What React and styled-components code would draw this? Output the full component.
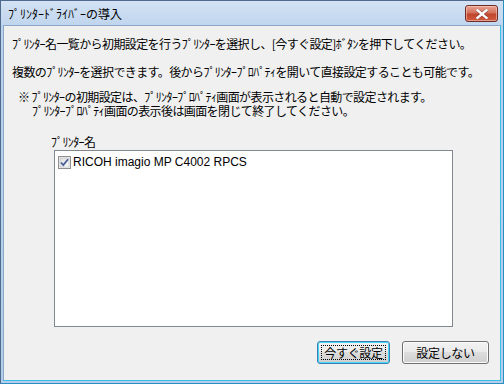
import React from "react";
import styled, { createGlobalStyle } from "styled-components";

const Global = createGlobalStyle`
  html, body { margin: 0; padding: 0; background: #fff; }
  body { width: 504px; height: 384px; overflow: hidden; }
`;

const Window = styled.div`
  box-sizing: border-box;
  width: 504px;
  height: 384px;
  display: flex;
  flex-direction: column;
  border: 1px solid #4e6a8c;
  border-bottom-color: #2a8fc0;
  border-right-color: #2a8fc0;
  background: linear-gradient(#c4d8ef, #b9d1ec 30px, #b3cdea);
  font-family: "Noto Sans CJK JP", "Noto Sans", sans-serif;
  font-size: 12px;
  color: #000;
`;

const TitleBar = styled.div`
  height: 24px;
  flex: none;
  display: flex;
  align-items: center;
  justify-content: space-between;
  padding: 0 5px 0 7px;
  background: linear-gradient(#d3e2f4, #c0d5ee);
`;

const Title = styled.span`
  font-size: 12px;
  line-height: 14px;
  margin-top: 2px;
`;

const CloseButton = styled.div`
  box-sizing: border-box;
  width: 33px;
  height: 17px;
  margin-top: 1px;
  border: 1px solid #6e2c27;
  border-radius: 3px;
  background: linear-gradient(#e8a493, #d4705c 45%, #c0452d 55%, #cf5b40);
  box-shadow: inset 0 0 0 1px rgba(255, 220, 210, 0.5);
  display: flex;
  align-items: center;
  justify-content: center;
`;

const Client = styled.div`
  flex: 1;
  margin: 0 2px 2px 2px;
  border: 1px solid #8aa7c8;
  border-bottom-color: #33c0ea;
  border-right-color: #33c0ea;
  background: #f0f0f0;
  display: flex;
  flex-direction: column;
  padding: 11px 0 0 8px;
`;

const Line = styled.div`
  line-height: 14px;
  white-space: nowrap;
  letter-spacing: -0.6px;
  margin-top: ${(p) => p.$mt || 0}px;
  padding-left: ${(p) => p.$indent || 0}px;
`;

const Label = styled.div`
  line-height: 14px;
  letter-spacing: -0.6px;
  margin: 17px 0 0 39px;
`;

const ListBox = styled.div`
  box-sizing: border-box;
  width: 399px;
  height: 177px;
  margin: 1px 0 0 42px;
  border: 1px solid #828790;
  background: #fff;
  padding: 4px 3px;
`;

const Item = styled.label`
  display: flex;
  align-items: center;
  gap: 2px;
  font-family: "Liberation Sans", Arial, sans-serif;
  font-size: 12px;
  line-height: 14px;
`;

const ButtonRow = styled.div`
  display: flex;
  justify-content: flex-end;
  gap: 12px;
  margin: 14px 11px 0 0;
`;

const Button = styled.div`
  box-sizing: border-box;
  width: ${(p) => p.$w}px;
  height: 23px;
  border: 1px solid ${(p) => (p.$default ? "#3c7fb1" : "#707070")};
  border-radius: 3px;
  background: linear-gradient(#f2f2f2 0%, #ebebeb 45%, #dddddd 50%, #cfcfcf 100%);
  box-shadow: inset 0 0 0 1px ${(p) => (p.$default ? "#48d7fb" : "#fcfcfc")};
  display: flex;
  align-items: center;
  justify-content: center;
  position: relative;
  font-size: 12px;
  letter-spacing: -0.3px;
  &::after {
    content: "";
    display: ${(p) => (p.$default ? "block" : "none")};
    position: absolute;
    inset: 3px;
    border: 1px dotted #000;
  }
`;

const Check = () => (
  <svg width="13" height="13" viewBox="0 0 13 13">
    <defs>
      <linearGradient id="cb" x1="0" y1="0" x2="1" y2="1">
        <stop offset="0" stopColor="#dcdcdc" />
        <stop offset="1" stopColor="#ffffff" />
      </linearGradient>
    </defs>
    <rect x="0.5" y="0.5" width="12" height="12" fill="#f4f4f4" stroke="#8e8f8f" />
    <rect x="2" y="2" width="9" height="9" fill="url(#cb)" stroke="#b4b8c0" strokeWidth="0.6" />
    <path d="M3 6.5 L5.3 9 L10 3.2" fill="none" stroke="#4a5f97" strokeWidth="1.8" />
  </svg>
);

const CloseX = () => (
  <svg width="12" height="10" viewBox="0 0 12 10">
    <path
      d="M1 1 L11 9 M11 1 L1 9"
      stroke="#5a3a36"
      strokeWidth="3.6"
      strokeLinecap="square"
      opacity="0.5"
    />
    <path d="M1.5 1.2 L10.5 8.8 M10.5 1.2 L1.5 8.8" stroke="#fff" strokeWidth="2.4" strokeLinecap="square" />
  </svg>
);

export default function App() {
  return (
    <>
      <Global />
      <Window>
        <TitleBar>
          <Title>ﾌﾟﾘﾝﾀｰﾄﾞﾗｲﾊﾞｰの導入</Title>
          <CloseButton>
            <CloseX />
          </CloseButton>
        </TitleBar>
        <Client>
          <Line>ﾌﾟﾘﾝﾀｰ名一覧から初期設定を行うﾌﾟﾘﾝﾀｰを選択し、[今すぐ設定]ﾎﾞﾀﾝを押下してください。</Line>
          <Line $mt={14}>複数のﾌﾟﾘﾝﾀｰを選択できます。後からﾌﾟﾘﾝﾀｰﾌﾟﾛﾊﾟﾃｨを開いて直接設定することも可能です。</Line>
          <Line $mt={11} $indent={6}>※ ﾌﾟﾘﾝﾀｰの初期設定は、ﾌﾟﾘﾝﾀｰﾌﾟﾛﾊﾟﾃｨ画面が表示されると自動で設定されます。</Line>
          <Line $indent={20}>ﾌﾟﾘﾝﾀｰﾌﾟﾛﾊﾟﾃｨ画面の表示後は画面を閉じて終了してください。</Line>
          <Label>ﾌﾟﾘﾝﾀｰ名</Label>
          <ListBox>
            <Item>
              <Check />
              RICOH imagio MP C4002 RPCS
            </Item>
          </ListBox>
          <ButtonRow>
            <Button $w={73} $default>今すぐ設定</Button>
            <Button $w={87}>設定しない</Button>
          </ButtonRow>
        </Client>
      </Window>
    </>
  );
}
